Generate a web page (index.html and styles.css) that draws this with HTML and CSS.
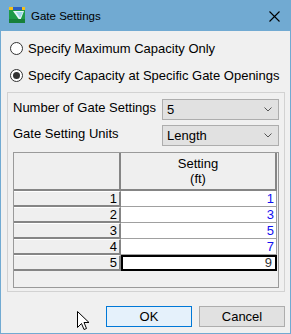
FILE: index.html
```html
<!DOCTYPE html>
<html>
<head>
    <meta charset="UTF-8">
    <title>Gate Settings</title>
    <link rel="stylesheet" href="styles.css">
</head>
<body>
    <div class="window">
        <div class="titlebar">
            <svg class="appIcon" width="16" height="16" viewBox="0 0 16 16">
                <rect x="0" y="0" width="16" height="16" fill="#1e9a48"/>
                <rect x="0" y="0" width="16" height="3" fill="#2a5fc4"/>
                <rect x="0" y="0" width="4" height="3" fill="#f2c21b"/>
                <rect x="13" y="0" width="3" height="3" fill="#f2c21b"/>
                <polygon points="4,4 15,4 11,14" fill="#e8f4f8"/>
                <polygon points="7,5 14,5 11,11" fill="#9fd6ea"/>
                <rect x="0" y="12" width="16" height="4" fill="#17803a"/>
            </svg>
            <span class="titleText">Gate Settings</span>
            <svg class="closeIcon" width="11" height="11" viewBox="0 0 11 11">
                <path d="M0.5 0.5 L10.5 10.5 M10.5 0.5 L0.5 10.5" stroke="#000" stroke-width="1.1" fill="none"/>
            </svg>
        </div>
        <div class="client">
            <div class="radioRow">
                <span class="radio"></span>
                <span>Specify Maximum Capacity Only</span>
            </div>
            <div class="radioRow">
                <span class="radio checked"></span>
                <span>Specify Capacity at Specific Gate Openings</span>
            </div>
            <div class="groupBox">
                <div class="field">
                    <span class="fieldLabel">Number of Gate Settings</span>
                    <div class="combo">
                        <span>5</span>
                        <svg width="8" height="5" viewBox="0 0 8 5"><path d="M0.5 0.5 L4 4 L7.5 0.5" stroke="#555" fill="none"/></svg>
                    </div>
                </div>
                <div class="field second">
                    <span class="fieldLabel">Gate Setting Units</span>
                    <div class="combo">
                        <span>Length</span>
                        <svg width="8" height="5" viewBox="0 0 8 5"><path d="M0.5 0.5 L4 4 L7.5 0.5" stroke="#555" fill="none"/></svg>
                    </div>
                </div>
                <div class="grid">
                    <div class="gridRow headRow">
                        <div class="rowHead corner"></div>
                        <div class="colHead">Setting<br>(ft)</div>
                    </div>
                    <div class="gridRow">
                        <div class="rowHead">1</div>
                        <div class="cell">1</div>
                    </div>
                    <div class="gridRow">
                        <div class="rowHead">2</div>
                        <div class="cell">3</div>
                    </div>
                    <div class="gridRow">
                        <div class="rowHead">3</div>
                        <div class="cell">5</div>
                    </div>
                    <div class="gridRow">
                        <div class="rowHead">4</div>
                        <div class="cell">7</div>
                    </div>
                    <div class="gridRow">
                        <div class="rowHead">5</div>
                        <div class="cell selected">9</div>
                    </div>
                </div>
            </div>
            <div class="buttonBar">
                <svg class="cursor" width="13" height="20" viewBox="0 0 13 20">
                    <path d="M0.5 0.5 L0.5 16.5 L4.5 12.5 L7 18.5 L9.5 17.5 L7 11.5 L12 11.5 Z" fill="#fff" stroke="#000" stroke-width="1"/>
                </svg>
                <button class="btn okBtn">OK</button>
                <button class="btn">Cancel</button>
            </div>
        </div>
    </div>
</body>
</html>
```

FILE: styles.css
```css
body {
    margin: 0;
    font-family: "Liberation Sans", Arial, sans-serif;
    font-size: 13px;
    color: #000;
}

.window {
    width: 291px;
    height: 334px;
    box-sizing: border-box;
    border: 1px solid #71aad2;
    border-top: none;
    background-color: #f0f0f0;
}

.titlebar {
    height: 31px;
    margin: 0 -1px;
    background-color: #71aad2;
    display: flex;
    align-items: center;
    padding-left: 9px;
}

.appIcon {
    margin-top: -1px;
}

.titleText {
    margin-left: 6px;
    font-size: 11.5px;
    flex: 1;
}

.closeIcon {
    margin-right: 11px;
    margin-top: 1px;
}

.client {
    padding: 4px 5px 0 6px;
}

.radioRow {
    height: 27px;
    display: flex;
    align-items: center;
    padding-left: 3px;
}

.radio {
    width: 11px;
    height: 11px;
    border: 1px solid #333;
    border-radius: 50%;
    background-color: #fff;
    margin-right: 5px;
    display: flex;
    align-items: center;
    justify-content: center;
}

.radio.checked::after {
    content: "";
    width: 7px;
    height: 7px;
    border-radius: 50%;
    background-color: #333;
}

.groupBox {
    margin-top: 3px;
    height: 200px;
    box-sizing: border-box;
    border: 1px solid #d2d2d2;
    padding: 6px 5px 0 5px;
}

.field {
    display: flex;
    align-items: center;
    justify-content: space-between;
}

.field.second {
    margin-top: 5px;
}

.fieldLabel {
    margin-top: -4px;
}

.combo {
    width: 117px;
    height: 21px;
    box-sizing: border-box;
    border: 1px solid #adadad;
    background-color: #e1e1e1;
    display: flex;
    align-items: center;
    justify-content: space-between;
    padding: 0 6px 0 4px;
}

.grid {
    margin-top: 6px;
    height: 136px;
    box-sizing: border-box;
    border: 1px solid #9a9a9a;
}

.gridRow {
    display: flex;
    height: 16px;
}

.gridRow.headRow {
    height: 38px;
}

.rowHead {
    width: 107px;
    box-sizing: border-box;
    background-color: #efefef;
    border-top: 1px solid #fff;
    border-right: 2px solid #858585;
    border-bottom: 2px solid #858585;
    text-align: right;
    padding-right: 2px;
    line-height: 13px;
}

.rowHead.corner {
    border-top: none;
}

.colHead {
    width: 156px;
    box-sizing: border-box;
    background-color: #efefef;
    border-right: 2px solid #858585;
    border-bottom: 2px solid #858585;
    text-align: center;
    line-height: 15px;
    padding-top: 3px;
}

.cell {
    width: 156px;
    box-sizing: border-box;
    background-color: #fff;
    border-right: 1px solid #a0a0a0;
    border-bottom: 1px solid #a0a0a0;
    text-align: right;
    color: #1010f0;
    padding-right: 2px;
    line-height: 15px;
}

.cell.selected {
    border: 2px solid #000;
    color: #333;
    line-height: 12px;
    padding-right: 3px;
}

.buttonBar {
    position: relative;
    margin-top: 14px;
    display: flex;
    justify-content: flex-end;
    gap: 7px;
}

.cursor {
    position: absolute;
    left: 70px;
    top: 5px;
}

.btn {
    width: 86px;
    height: 21px;
    box-sizing: border-box;
    border: 1px solid #adadad;
    background-color: #e1e1e1;
    font-family: "Liberation Sans", Arial, sans-serif;
    font-size: 13px;
    color: #000;
    padding: 0;
}

.okBtn {
    border-color: #0078d7;
    background-color: #e5f1fb;
}
```
